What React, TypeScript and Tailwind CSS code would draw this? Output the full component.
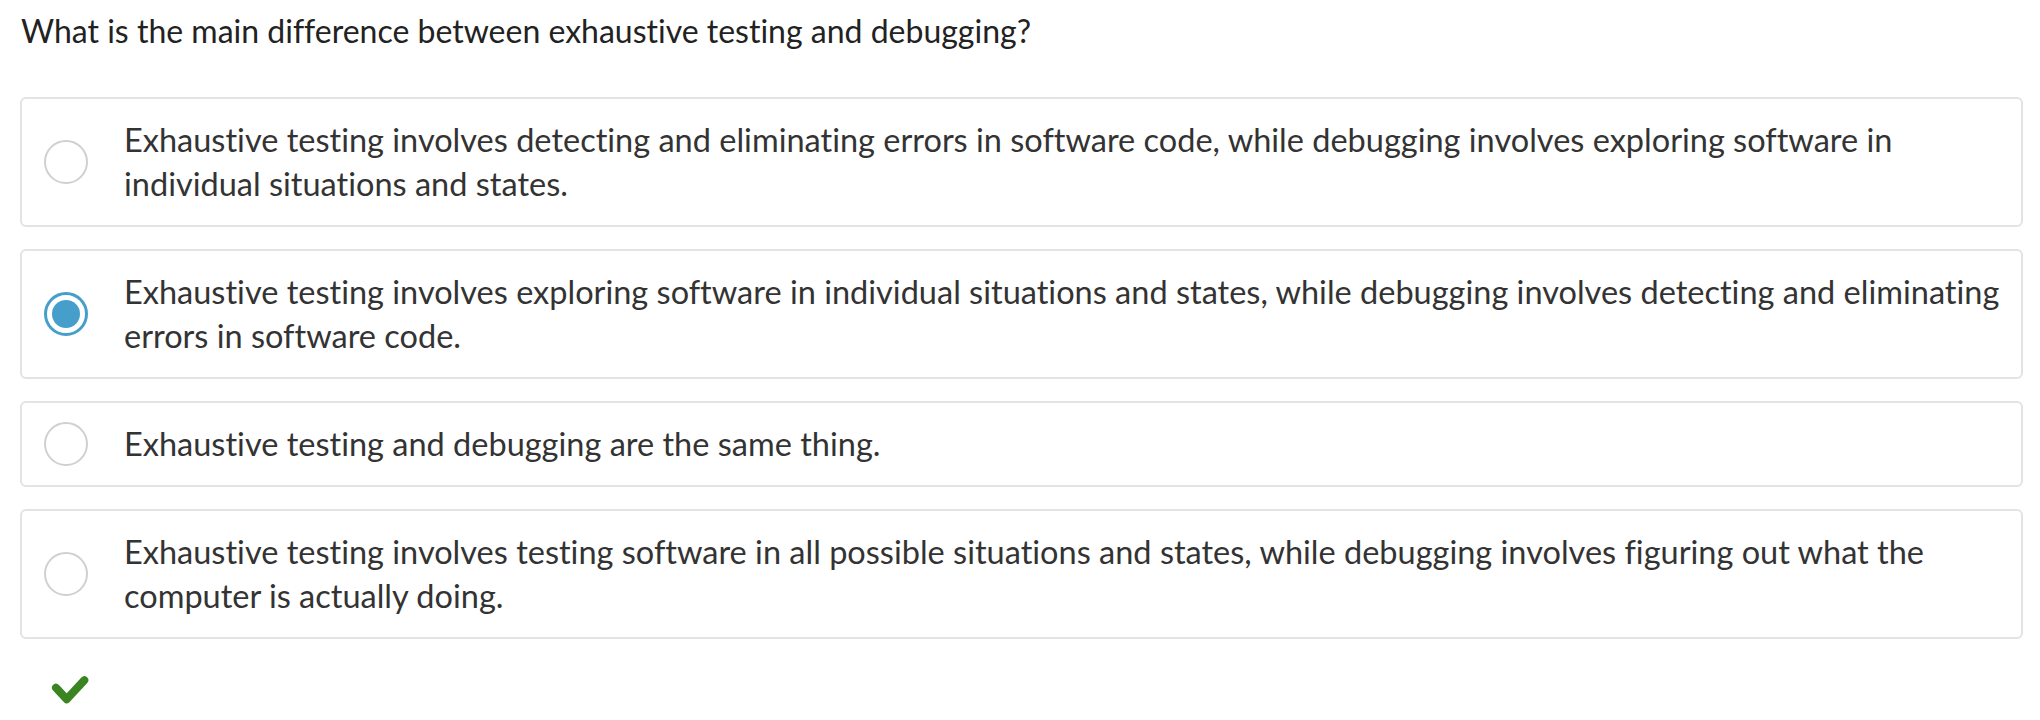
import React from "react";

const options = [
  {
    text: "Exhaustive testing involves detecting and eliminating errors in software code, while debugging involves exploring software in individual situations and states.",
    selected: false,
  },
  {
    text: "Exhaustive testing involves exploring software in individual situations and states, while debugging involves detecting and eliminating errors in software code.",
    selected: true,
  },
  {
    text: "Exhaustive testing and debugging are the same thing.",
    selected: false,
  },
  {
    text: "Exhaustive testing involves testing software in all possible situations and states, while debugging involves figuring out what the computer is actually doing.",
    selected: false,
  },
];

function Radio({ selected }: { selected: boolean }) {
  if (selected) {
    return (
      <div className="flex h-[44px] w-[44px] shrink-0 items-center justify-center rounded-full border-[3px] border-[#469fca] bg-white">
        <div className="h-[28px] w-[28px] rounded-full bg-[#469fca]" />
      </div>
    );
  }
  return <div className="h-[44px] w-[44px] shrink-0 rounded-full border-2 border-[#d0d0d0] bg-white" />;
}

export default function App() {
  return (
    <div
      className="min-h-[720px] w-full bg-white pl-[20px] pr-[17px] text-[#333333] [font-variant-ligatures:none]"
      style={{ fontFamily: "Lato, 'Open Sans', sans-serif" }}
    >
      <div className="pt-[9px] pl-[1px] text-[32px] leading-[44px] text-[#222222]">
        What is the main difference between exhaustive testing and debugging?
      </div>
      <div className="mt-[44px] flex flex-col gap-[22px]">
        {options.map((o, i) => (
          <div
            key={i}
            className="flex items-center rounded-[6px] border-2 border-[#e3e3e3] bg-white py-[19px] pl-[22px] pr-[12px]"
          >
            <Radio selected={o.selected} />
            <div className="ml-[36px] text-[32.5px] leading-[44px]">{o.text}</div>
          </div>
        ))}
      </div>
      <div className="mt-[34px] pl-[30px]">
        <svg width="40" height="32" viewBox="0 0 40 32">
          <polyline
            points="6,14.7 16.7,26.3 34.3,7.3"
            fill="none"
            stroke="#3a8422"
            strokeWidth="8"
            strokeLinecap="round"
            strokeLinejoin="round"
          />
        </svg>
      </div>
    </div>
  );
}
